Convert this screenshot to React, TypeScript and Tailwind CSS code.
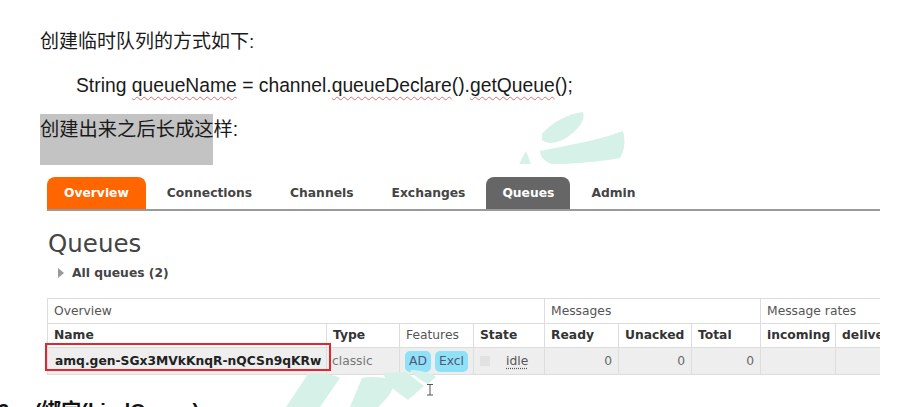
const doc = { fontFamily: '"Liberation Sans", "Noto Sans CJK SC", sans-serif' }
const ui = { fontFamily: '"DejaVu Sans", Verdana, sans-serif' }

const tabs = [
  { label: 'Overview', active: 'orange' },
  { label: 'Connections' },
  { label: 'Channels' },
  { label: 'Exchanges' },
  { label: 'Queues', active: 'gray' },
  { label: 'Admin' },
]

function Squiggle({ children }: { children: string }) {
  return (
    <span className="underline decoration-wavy decoration-[#e07070] decoration-[1px] underline-offset-[4px]">
      {children}
    </span>
  )
}

function Watermark() {
  return (
    <svg className="pointer-events-none absolute left-0 top-0" width="903" height="407" viewBox="0 0 903 407">
      <g fill="#d6f1e8">
        <path d="M542 134 C552 122 568 114 583 112 C586 120 578 130 566 138 C558 143 548 145 542 140 Z" />
        <path d="M540 151 C565 146 600 140 623 131 C626 142 624 152 620 158 C598 162 570 164 552 164 C545 162 540 157 540 151 Z" />
        <path d="M519 164 L526 151 L531 164 Z" />
        <path d="M286 407 L308 374 C318 372 332 374 340 378 L320 407 Z" />
        <path d="M350 407 L362 378 C372 376 384 377 392 380 C396 388 388 398 378 407 Z" />
        <path d="M382 373 L406 372 L424 386 L408 400 L392 388 Z" />
        <path d="M410 370 C420 370 430 372 436 377 L428 384 C420 380 414 376 410 370 Z" />
      </g>
      <g stroke="#555" strokeWidth="1" fill="none">
        <path d="M427 384.5 H433 M430 384.5 V395 M427 395 H433" />
      </g>
    </svg>
  )
}

export default function App() {
  return (
    <div className="relative w-[903px] h-[407px] overflow-hidden bg-white text-[#1a1a1a]">
      <div className="pl-[40px] pt-[30px]" style={doc}>
        <p className="text-[19px] leading-[24px] whitespace-nowrap">创建临时队列的方式如下:</p>
        <p className="mt-[20px] pl-[36px] text-[19.3px] leading-[24px] whitespace-nowrap">
          String <Squiggle>queueName</Squiggle> = channel.<Squiggle>queueDeclare</Squiggle>().<Squiggle>getQueue</Squiggle>();
        </p>
        <div className="mt-[16px] w-[173px] h-[51px] bg-[#c3c3c3] pt-[4px]">
          <p className="text-[19.3px] leading-[24px] whitespace-nowrap">创建出来之后长成这样:</p>
        </div>
      </div>

      <div className="ml-[47px] mt-[12px] w-[833px]" style={ui}>
        <div className="flex gap-[4px] h-[32px]">
          {tabs.map((t) => (
            <div
              key={t.label}
              className={
                t.active === 'orange'
                  ? 'flex items-center px-[17px] rounded-t-[8px] bg-[#ff6600] text-white text-[12.3px] font-bold'
                  : t.active === 'gray'
                  ? 'flex items-center px-[16px] rounded-t-[8px] bg-[#666666] text-white text-[12.3px] font-bold'
                  : 'flex items-center px-[17px] text-[#444] text-[12.3px] font-bold'
              }
            >
              {t.label}
            </div>
          ))}
        </div>
        <div className="h-[2px] bg-[#9a9a9a]" />

        <h1 className="mt-[19px] pl-[1px] text-[24.5px] leading-[28px] text-[#444]">Queues</h1>
        <div className="mt-[7px] flex items-center h-[16px] pl-[11px] gap-[8px]">
          <span className="w-0 h-0 border-y-[5px] border-y-transparent border-l-[6px] border-l-[#999]" />
          <span className="text-[12.3px] font-bold text-[#444]">All queues (2)</span>
        </div>

        <div className="relative mt-[17px]">
          <div className="overflow-hidden">
            <table className="table-fixed border-collapse w-[883px] text-[12.3px]">
              <colgroup>
                <col className="w-[279px]" />
                <col className="w-[73px]" />
                <col className="w-[74px]" />
                <col className="w-[71px]" />
                <col className="w-[74px]" />
                <col className="w-[73px]" />
                <col className="w-[69px]" />
                <col className="w-[75px]" />
                <col className="w-[95px]" />
              </colgroup>
              <tbody>
                <tr className="h-[25px] text-[#555]">
                  <td colSpan={4} className="border border-[#dddddd] px-[6px] text-left">Overview</td>
                  <td colSpan={3} className="border border-[#dddddd] px-[6px] text-left">Messages</td>
                  <td colSpan={2} className="border border-[#dddddd] px-[6px] text-left whitespace-nowrap">Message rates</td>
                </tr>
                <tr className="h-[24px] text-[#333] font-bold">
                  <td className="border border-[#dddddd] px-[6px]">Name</td>
                  <td className="border border-[#dddddd] px-[6px]">Type</td>
                  <td className="border border-[#dddddd] px-[6px] font-normal text-[#555]">Features</td>
                  <td className="border border-[#dddddd] px-[6px]">State</td>
                  <td className="border border-[#dddddd] px-[6px]">Ready</td>
                  <td className="border border-[#dddddd] px-[6px]">Unacked</td>
                  <td className="border border-[#dddddd] px-[6px]">Total</td>
                  <td className="border border-[#dddddd] px-[6px]">incoming</td>
                  <td className="border border-[#dddddd] px-[6px] whitespace-nowrap">deliver / get</td>
                </tr>
                <tr className="h-[27px] bg-[#eeeeee]">
                  <td className="border border-[#dddddd] px-[7px] font-bold text-[#222] whitespace-nowrap">amq.gen-SGx3MVkKnqR-nQCSn9qKRw</td>
                  <td className="border border-[#dddddd] px-[5px] text-[#777]">classic</td>
                  <td className="border border-[#dddddd] px-[5px]">
                    <div className="flex gap-[4px]">
                      <span className="rounded-[5px] bg-[#8fe1f7] px-[4px] leading-[21px] text-[#557]">AD</span>
                      <span className="rounded-[5px] bg-[#8fe1f7] px-[4px] leading-[21px] text-[#557]">Excl</span>
                    </div>
                  </td>
                  <td className="border border-[#dddddd] px-[6px]">
                    <div className="flex items-center">
                      <span className="w-[10px] h-[10px] bg-[#e2e2e2]" />
                      <span className="ml-[16px] text-[#555] underline decoration-dotted underline-offset-[3px]">idle</span>
                    </div>
                  </td>
                  <td className="border border-[#dddddd] px-[6px] text-right text-[#666]">0</td>
                  <td className="border border-[#dddddd] px-[6px] text-right text-[#666]">0</td>
                  <td className="border border-[#dddddd] px-[6px] text-right text-[#666]">0</td>
                  <td className="border border-[#dddddd] px-[6px]" />
                  <td className="border border-[#dddddd] px-[6px]" />
                </tr>
              </tbody>
            </table>
          </div>
          <div className="absolute left-[-2px] top-[45px] w-[286px] h-[28px] border-2 border-[#e3262c]" />
        </div>
      </div>

      <p className="mt-[24px] -ml-[2px] text-[20px] leading-[24px] font-bold whitespace-nowrap text-[#111]" style={doc}>
        3、 (绑定(bindQueue)
      </p>

      <Watermark />
    </div>
  )
}
